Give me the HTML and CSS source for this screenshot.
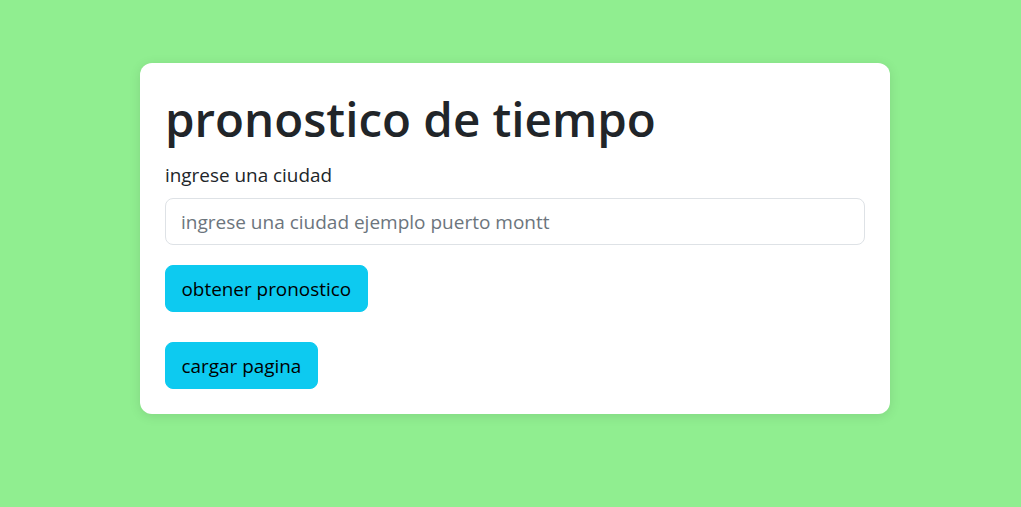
FILE: index.html
```html
<!DOCTYPE html>
<html lang="es">
<head>
<meta charset="utf-8">
<title>pronostico de tiempo</title>
<link rel="stylesheet" href="styles.css">
</head>
<body>
  <main class="card">
    <h1 class="title">pronostico de tiempo</h1>
    <label class="label" for="city">ingrese una ciudad</label>
    <input class="input" id="city" type="text" placeholder="ingrese una ciudad ejemplo puerto montt">
    <div class="actions">
      <button class="btn" type="button">obtener pronostico</button>
      <button class="btn" type="button">cargar pagina</button>
    </div>
  </main>
</body>
</html>
```

FILE: styles.css
```css
* { box-sizing: border-box; }
html, body { height: 100%; }
body {
  margin: 0;
  padding-top: 63px;
  background: #90ee90;
  font-family: "Open Sans", "Noto Sans", sans-serif;
  color: #212529;
}
.card {
  width: 750px;
  margin-left: 140px;
  background: #fff;
  border-radius: 12px;
  padding: 25px;
  box-shadow: 0 2px 12px rgba(0, 0, 0, 0.1);
  display: flex;
  flex-direction: column;
}
.title {
  margin: 2px 0 14px;
  font-size: 47.5px;
  font-weight: 600;
  line-height: 1.2;
  color: #212529;
}
.label {
  font-size: 18.9px;
  line-height: 1.5;
  margin-bottom: 9px;
}
.input {
  width: 100%;
  height: 47px;
  padding: 0 15px;
  font-family: inherit;
  font-size: 19px;
  color: #212529;
  border: 1px solid #dee2e6;
  border-radius: 8px;
  outline: none;
}
.input::placeholder { color: #6c757d; }
.actions {
  display: flex;
  flex-direction: column;
  align-items: flex-start;
  gap: 30px;
  margin-top: 20px;
}
.btn {
  height: 47px;
  padding: 0 15.5px;
  font-family: inherit;
  font-size: 18.9px;
  color: #000;
  background: #0dcaf0;
  border: 1px solid #0dcaf0;
  border-radius: 8px;
  cursor: pointer;
}
```
